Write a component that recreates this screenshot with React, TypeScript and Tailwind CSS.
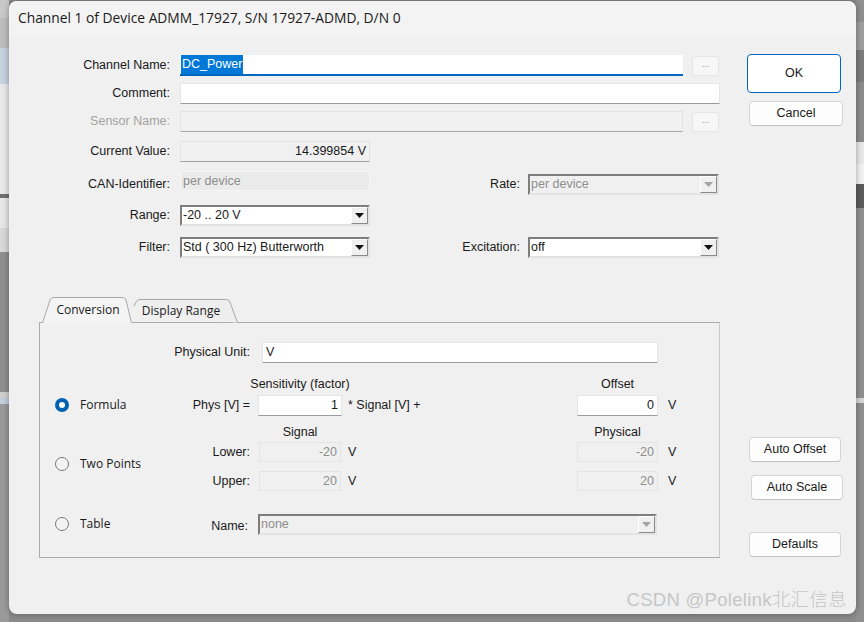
import React from 'react'

const lbl = "font-['Liberation_Sans',Arial,sans-serif] text-[12.5px] text-[#1a1a1a]"
const seg = "font-['Open_Sans','Noto_Sans',sans-serif] text-[12px] text-[#1a1a1a]"

function Dots({ className = '' }: { className?: string }) {
  return (
    <div
      className={`flex h-[20px] w-[27px] items-center justify-center rounded-[3px] border border-[#e6e6e6] bg-[#f7f7f7] pb-1 text-[9px] text-[#9a9a9a] ${className}`}
    >
      ...
    </div>
  )
}

function Combo({
  value,
  width,
  disabled = false,
}: {
  value: string
  width: string
  disabled?: boolean
}) {
  return (
    <div
      className={`flex h-[21px] items-stretch border-2 border-t-[#7d7d7d] border-l-[#7d7d7d] border-b-[#e3e3e3] border-r-[#e3e3e3] ${width} ${
        disabled ? 'bg-[#f0f0f0]' : 'bg-white'
      }`}
    >
      <div
        className={`flex flex-1 items-center pl-[1px] ${lbl} ${disabled ? 'text-[#8d8d8d]' : ''}`}
      >
        {value}
      </div>
      <div className="flex w-[17px] items-center justify-center border border-t-white border-l-white border-b-[#8a8a8a] border-r-[#8a8a8a] bg-[#f0f0f0]">
        <svg width="9" height="5" viewBox="0 0 9 5">
          <path d="M0 0h9L4.5 5z" fill={disabled ? '#a3a3a3' : '#111'} />
        </svg>
      </div>
    </div>
  )
}

function Radio({
  checked = false,
  label,
  className = '',
}: {
  checked?: boolean
  label: string
  className?: string
}) {
  return (
    <div className={`flex w-[150px] items-center pl-[15px] ${className}`}>
      {checked ? (
        <div className="flex h-[14px] w-[14px] items-center justify-center rounded-full bg-[#0063b1]">
          <div className="h-[6px] w-[6px] rounded-full bg-white" />
        </div>
      ) : (
        <div className="h-[14px] w-[14px] rounded-full border border-[#7a7a7a] bg-[#f3f3f3]" />
      )}
      <span className={`ml-[11px] ${seg} text-[12.5px]`}>{label}</span>
    </div>
  )
}

function Btn({ children, className = '' }: { children: React.ReactNode; className?: string }) {
  return (
    <div
      className={`flex items-center justify-center rounded-[4px] border border-[#d6d6d6] border-b-[#c2c2c2] bg-[#fdfdfd] ${lbl} ${className}`}
    >
      {children}
    </div>
  )
}

function Disabled({ value, className = '' }: { value: string; className?: string }) {
  return (
    <div
      className={`flex h-[20px] items-center justify-end border border-[#e4e4e4] bg-[#f0f0f0] pr-[3px] ${lbl} text-[#8d8d8d] ${className}`}
    >
      {value}
    </div>
  )
}

export default function App() {
  return (
    <div className="relative flex h-[622px] w-[864px] overflow-hidden bg-[#8a8a8a]">
      {/* glimpses of the window behind */}
      <div className="flex w-[9px] flex-col bg-[#9a9a9a]">
        <div className="h-[18px] bg-[#c9c9c9]" />
        <div className="h-[30px] bg-[#bdbdbd]" />
        <div className="h-[36px] bg-[#c6d2e0]" />
        <div className="h-[110px] bg-[#e8e8e8]" />
        <div className="h-[4px] bg-[#6f6f6f]" />
        <div className="h-[30px] bg-[#e6e6e6]" />
        <div className="h-[24px] bg-[#d8d8d8]" />
        <div className="h-[140px] bg-[#8e8e8e]" />
        <div className="h-[6px] bg-[#d0d0d0]" />
        <div className="h-[6px] bg-[#c2cedc]" />
      </div>
      <div className="relative mt-[1px] flex h-[613px] w-[847px] flex-col overflow-hidden rounded-[8px] bg-[#f0f0f0] shadow-[0_0_6px_rgba(0,0,0,0.35)]">
        <div className="flex h-[35px] items-center bg-[#f3f3f3] pl-[9px] font-['Open_Sans','Noto_Sans',sans-serif] text-[13.8px] text-[#1a1a1a]">
          Channel 1 of Device ADMM_17927, S/N 17927-ADMD, D/N 0
        </div>

        <div className="flex">
          {/* main form */}
          <div className="flex w-[711px] flex-col">
            <div className="mt-[19px] flex h-[21px] items-center">
              <div className={`w-[161px] text-right ${lbl}`}>Channel Name:</div>
              <div className="ml-[10px] flex h-[21px] w-[503px] items-center border-b-2 border-[#0067c0] bg-white pl-[1px]">
                <span className={`bg-[#0078d7] px-[1px] ${lbl} text-white`}>DC_Power</span>
              </div>
              <Dots className="ml-[9px]" />
            </div>

            <div className="mt-[7px] flex h-[21px] items-center">
              <div className={`w-[161px] text-right ${lbl}`}>Comment:</div>
              <div className="ml-[10px] h-[21px] w-[540px] border border-[#e6e6e6] border-b-[#9c9c9c] bg-white" />
            </div>

            <div className="mt-[7px] flex h-[21px] items-center">
              <div className={`w-[161px] text-right ${lbl} text-[#a3a3a3]`}>Sensor Name:</div>
              <div className="ml-[10px] h-[21px] w-[503px] border border-[#e3e3e3] border-b-[#a8a8a8] bg-[#f0f0f0]" />
              <Dots className="ml-[9px]" />
            </div>

            <div className="mt-[9px] flex h-[21px] items-center">
              <div className={`w-[161px] text-right ${lbl}`}>Current Value:</div>
              <div
                className={`ml-[10px] flex h-[21px] w-[190px] items-center justify-end border border-[#e3e3e3] border-b-[#a0a0a0] bg-[#f0f0f0] pr-[3px] ${lbl}`}
              >
                14.399854 V
              </div>
            </div>

            <div className="mt-[9px] flex h-[24px] items-center">
              <div className={`w-[161px] pt-[3px] text-right ${lbl}`}>CAN-Identifier:</div>
              <div
                className={`ml-[10px] h-[20px] w-[190px] self-start border border-[#f6f6f6] bg-[#ebebeb] pl-[2px] ${lbl} text-[#8d8d8d]`}
              >
                per device
              </div>
              <div className={`w-[150px] pt-[3px] text-right ${lbl}`}>Rate:</div>
              <div className="ml-[8px] self-end">
                <Combo value="per device" width="w-[191px]" disabled />
              </div>
            </div>

            <div className="mt-[10px] flex h-[21px] items-center">
              <div className={`w-[161px] text-right ${lbl}`}>Range:</div>
              <div className="ml-[10px]">
                <Combo value="-20 .. 20 V" width="w-[190px]" />
              </div>
            </div>

            <div className="mt-[11px] flex h-[21px] items-center">
              <div className={`w-[161px] text-right ${lbl}`}>Filter:</div>
              <div className="ml-[10px]">
                <Combo value="Std ( 300 Hz) Butterworth" width="w-[190px]" />
              </div>
              <div className={`w-[150px] text-right ${lbl}`}>Excitation:</div>
              <div className="ml-[8px]">
                <Combo value="off" width="w-[191px]" />
              </div>
            </div>

            {/* tabs */}
            <div className="relative z-10 mt-[39px] -mb-px flex h-[26px] items-end pl-[33px]">
              <div className="relative flex h-[26px] w-[90px] items-center justify-center">
                <svg className="absolute inset-0" width="90" height="26" viewBox="0 0 90 26">
                  <path d="M0.5 26 L8 3 Q9 0.5 12 0.5 L80 0.5 Q83 0.5 84 3 L89.5 26" fill="#f4f4f4" stroke="#a8a8a8" />
                </svg>
                <span className={`relative pl-[2px] ${seg}`}>Conversion</span>
              </div>
              <div className="relative -ml-[2px] flex h-[24px] w-[108px] items-center justify-center">
                <svg className="absolute inset-0" width="108" height="24" viewBox="0 0 108 24">
                  <path d="M4 7 L6 3 Q7 0.5 10 0.5 L96 0.5 Q99 0.5 100 3 L107.5 24" fill="#eeeeee" stroke="#a8a8a8" />
                </svg>
                <span className={`relative pr-[6px] ${seg}`}>Display Range</span>
              </div>
            </div>

            <div className="ml-[30px] flex h-[236px] w-[681px] flex-col border border-[#acacac] border-r-[#c8c8c8] bg-[#f0f0f0]">
              <div className="mt-[19px] flex h-[21px] items-center">
                <div className={`w-[210px] text-right ${lbl}`}>Physical Unit:</div>
                <div className={`ml-[12px] flex h-[21px] w-[396px] items-center border border-[#e6e6e6] border-b-[#9c9c9c] bg-white pl-[3px] ${lbl}`}>
                  V
                </div>
              </div>

              <div className="mt-[14px] flex h-[14px] items-center">
                <div className="w-[218px]" />
                <div className={`flex w-[84px] justify-center whitespace-nowrap ${lbl}`}>
                  Sensitivity (factor)
                </div>
                <div className="w-[235px]" />
                <div className={`flex w-[81px] justify-center ${lbl}`}>Offset</div>
              </div>

              <div className="mt-[4px] flex h-[21px] items-center">
                <Radio checked label="Formula" className="-mt-[1px]" />
                <div className={`w-[60px] text-right ${lbl}`}>Phys [V] =</div>
                <div className={`ml-[8px] flex h-[21px] w-[84px] items-center justify-end border border-[#e6e6e6] border-b-[#9c9c9c] bg-white pr-[3px] ${lbl}`}>
                  1
                </div>
                <div className={`w-[235px] pl-[6px] ${lbl}`}>* Signal [V] +</div>
                <div className={`flex h-[21px] w-[81px] items-center justify-end border border-[#e6e6e6] border-b-[#9c9c9c] bg-white pr-[3px] ${lbl}`}>
                  0
                </div>
                <div className={`ml-[10px] ${lbl}`}>V</div>
              </div>

              <div className="mt-[9px] flex h-[14px] items-center">
                <div className="w-[218px]" />
                <div className={`flex w-[84px] justify-center ${lbl}`}>Signal</div>
                <div className="w-[235px]" />
                <div className={`flex w-[81px] justify-center ${lbl}`}>Physical</div>
              </div>

              <div className="mt-[3px] flex items-center">
                <Radio label="Two Points" className="-mt-[5px]" />
                <div className="flex flex-col gap-[9px]">
                  {[
                    ['Lower:', '-20'],
                    ['Upper:', '20'],
                  ].map(([name, v]) => (
                    <div key={name} className="flex h-[20px] items-center">
                      <div className={`w-[60px] text-right ${lbl}`}>{name}</div>
                      <div className="ml-[8px] w-[84px] pl-[1px]">
                        <Disabled value={v} className="w-[82px]" />
                      </div>
                      <div className={`w-[235px] pl-[6px] ${lbl}`}>V</div>
                      <Disabled value={v} className="w-[81px]" />
                      <div className={`ml-[10px] ${lbl}`}>V</div>
                    </div>
                  ))}
                </div>
              </div>

              <div className="mt-[23px] flex h-[21px] items-center">
                <Radio label="Table" className="-mt-[1px]" />
                <div className={`w-[58px] pt-[4px] text-right ${lbl}`}>Name:</div>
                <div className="ml-[10px]">
                  <Combo value="none" width="w-[399px]" disabled />
                </div>
              </div>
            </div>
          </div>

          {/* buttons */}
          <div className="flex flex-col pl-[27px]">
            <div className={`mt-[18px] flex h-[39px] w-[94px] items-center justify-center rounded-[4px] border border-[#0067c0] bg-white ${lbl}`}>
              OK
            </div>
            <Btn className="mt-[8px] ml-[2px] h-[25px] w-[94px]">Cancel</Btn>
            <Btn className="mt-[311px] ml-[2px] h-[25px] w-[92px]">Auto Offset</Btn>
            <Btn className="mt-[13px] ml-[4px] h-[25px] w-[92px]">Auto Scale</Btn>
            <Btn className="mt-[32px] ml-[2px] h-[25px] w-[92px]">Defaults</Btn>
          </div>
        </div>

        <div className="absolute bottom-[0px] right-[9px] font-['Liberation_Sans','Noto_Sans_CJK_SC',sans-serif] text-[18.5px] font-light tracking-[0.3px] text-[#c6c6c6]">
          CSDN @Polelink北汇信息
        </div>
      </div>
      <div className="flex flex-1 flex-col bg-[#8f8f8f]">
        <div className="mt-[22px] h-[28px] bg-[#9e9e9e]" />
        <div className="h-[32px] bg-[#7c7c7c]" />
        <div className="h-[60px] bg-[#8c8c8c]" />
        <div className="h-[22px] bg-[#e8e8e8]" />
        <div className="h-[20px] bg-[#f2f2f2]" />
        <div className="h-[24px] bg-[#5c5c5c]" />
        <div className="mt-[190px] h-[5px] bg-[#d6d6d6]" />
      </div>
    </div>
  )
}
